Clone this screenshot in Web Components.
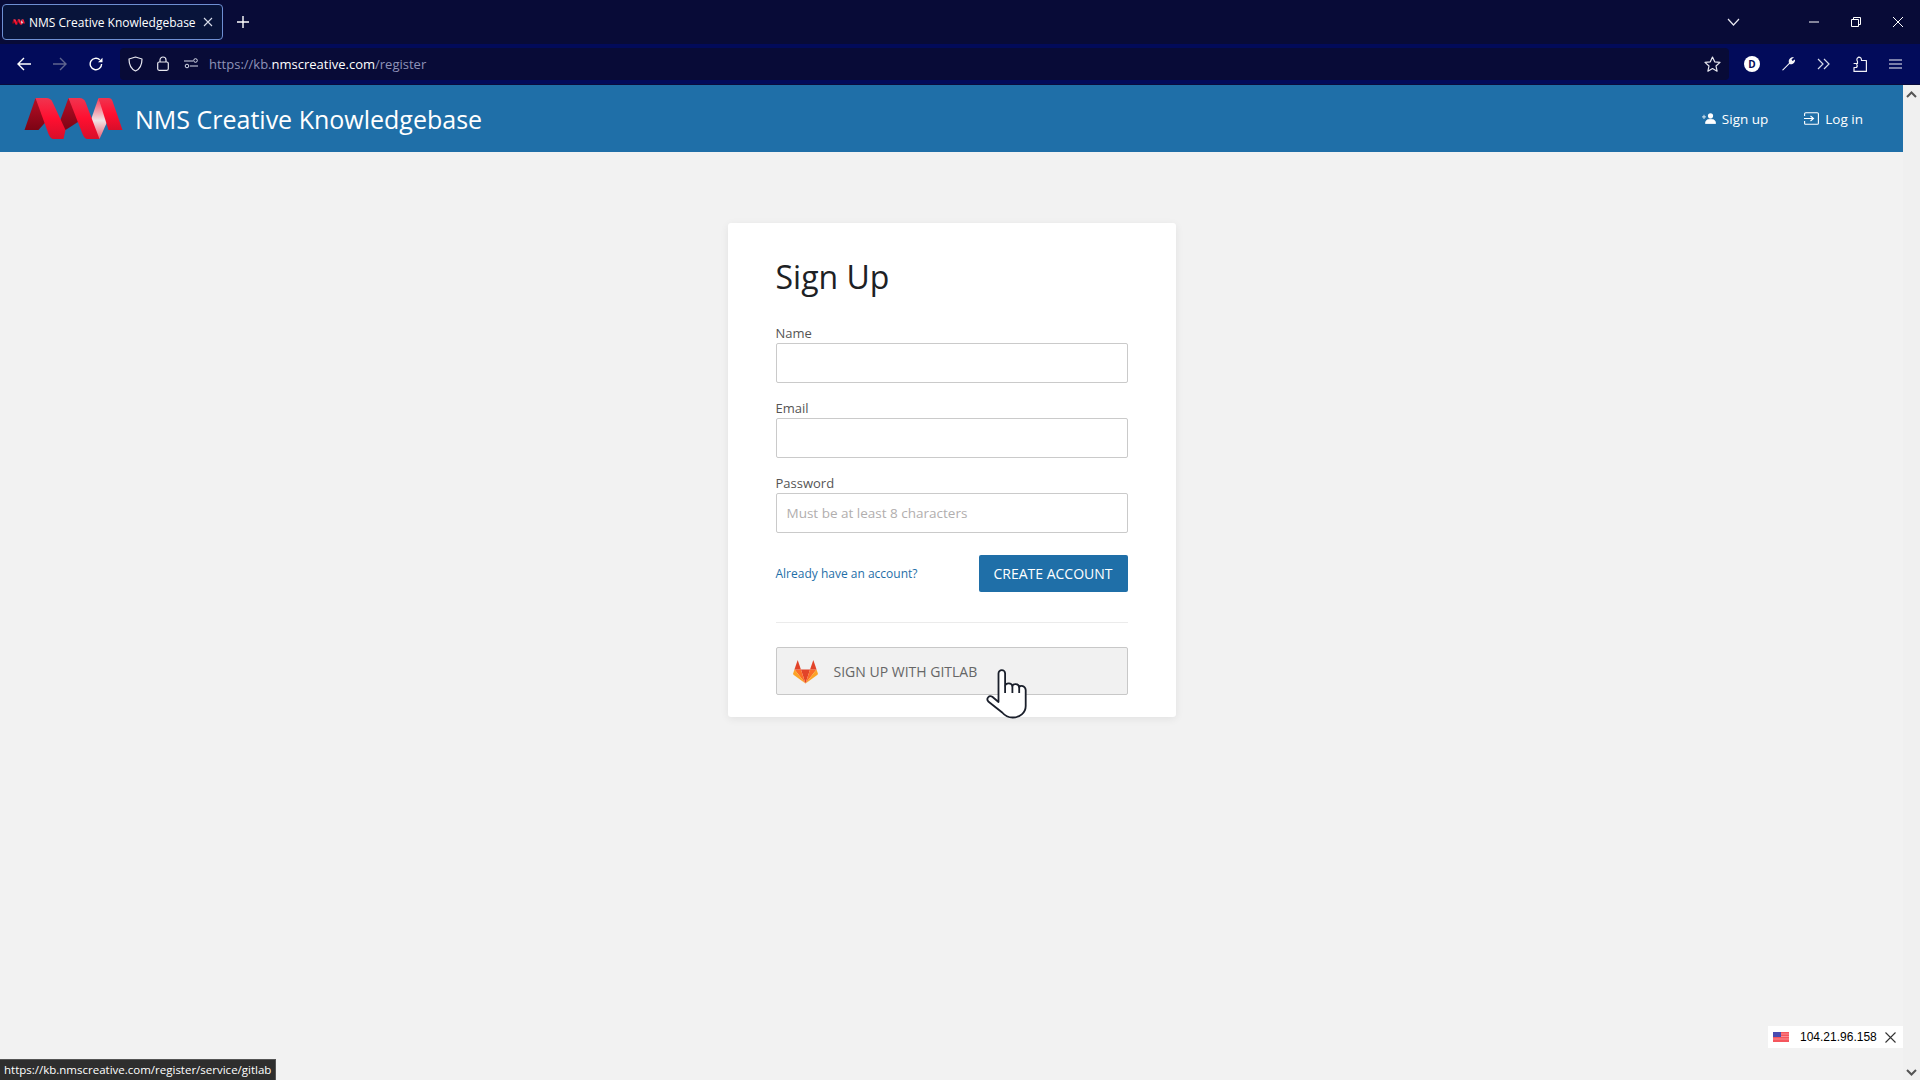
<!DOCTYPE html>
<html lang="en">
<head>
<meta charset="utf-8">
<title>NMS Creative Knowledgebase</title>
<style>
  html, body { margin: 0; height: 100%; overflow: hidden; }
  body { display: flex; flex-direction: column; width: 1920px; height: 1080px; background: #f2f2f2; font-family: "Open Sans", "Noto Sans", sans-serif; position: relative; }
</style>
</head>
<body>
<browser-tabs title-text="NMS Creative Knowledgebase"></browser-tabs>
<browser-toolbar></browser-toolbar>
<site-page>
  <site-header slot="header" brand="NMS Creative Knowledgebase"></site-header>
  <signup-card>
    <form-field label="Name"></form-field>
    <form-field label="Email"></form-field>
    <form-field label="Password" placeholder="Must be at least 8 characters"></form-field>
  </signup-card>
</site-page>
<status-tip>https://kb.nmscreative.com/register/service/gitlab</status-tip>
<ip-badge>104.21.96.158</ip-badge>
<hand-cursor></hand-cursor>

<script>
// Logo de NMS, se usa en el header y en pequeño en la pestaña
const logoNms = (w, h, id) => `
<svg width="${w}" height="${h}" viewBox="0 0 98 43" aria-hidden="true">
  <defs>
    <linearGradient id="${id}r" x1="0" y1="0" x2="0" y2="1"><stop offset="0" stop-color="#f0344f"/><stop offset=".5" stop-color="#ff0f30"/><stop offset="1" stop-color="#d80e2a"/></linearGradient>
    <linearGradient id="${id}d" x1="0" y1="0" x2="0" y2="1"><stop offset="0" stop-color="#b80d25"/><stop offset="1" stop-color="#7c0414"/></linearGradient>
    <linearGradient id="${id}w" x1="0" y1="0" x2="0" y2="1"><stop offset="0" stop-color="#fb3a55"/><stop offset=".55" stop-color="#eee4e6"/><stop offset="1" stop-color="#f25a70"/></linearGradient>
  </defs>
  <polygon points="0,33 11,1 22,24 14,33" fill="url(#${id}d)"/>
  <polygon points="34,28 44,1 55,24 41,33" fill="url(#${id}d)"/>
  <polygon points="66,24 74,1 83,24 75,42 68,35" fill="url(#${id}w)"/>
  <path d="M11 1H22Q26 1 28 5L41 33L39 42H29Q26 42 24 37Z" fill="url(#${id}r)"/>
  <path d="M44 1H55Q59 1 61 5L75 42H63Q60 42 58 37Z" fill="url(#${id}r)"/>
  <path d="M74 1H84Q87 1 88 4L98 33H84Z" fill="url(#${id}r)"/>
</svg>`;

class BrowserTabs extends HTMLElement {
  constructor() {
    super();
    this.attachShadow({ mode: 'open' });
  }
  connectedCallback() {
    this.shadowRoot.innerHTML = `
    <style>
      :host { display: flex; align-items: center; height: 44px; background: #080b37; color: #fff; flex: none; padding-left: 2px; box-sizing: border-box; }
      .tab { width: 221px; height: 36px; box-sizing: border-box; border: 1px solid #6e8fd3; border-radius: 4px; background: #08143a; display: flex; align-items: center; padding-left: 9px; font-size: 12px; }
      .tab span { margin-left: 4px; flex: 1; white-space: nowrap; }
      .tab svg.x { margin-right: 9px; }
      .plus { margin-left: 14px; }
      .right { margin-left: auto; display: flex; align-items: center; }
      .down { margin-right: 69px; }
      .ctl { margin-right: 32px; display: flex; }
    </style>
    <div class="tab">
      ${logoNms(13, 6, 'fav')}
      <span>${this.getAttribute('title-text')}</span>
      <svg class="x" width="10" height="10" viewBox="0 0 10 10"><path d="M1 1L9 9M9 1L1 9" stroke="#d8dcea" stroke-width="1.1"/></svg>
    </div>
    <svg class="plus" width="12" height="12" viewBox="0 0 12 12"><path d="M6 0V12M0 6H12" stroke="#fff" stroke-width="1.4"/></svg>
    <div class="right">
      <svg class="down" width="13" height="8" viewBox="0 0 13 8"><path d="M1 1L6.5 7L12 1" fill="none" stroke="#e8e8f0" stroke-width="1.2"/></svg>
      <svg class="ctl" width="10" height="10" viewBox="0 0 10 10"><path d="M0 5H10" stroke="#fff" stroke-width="1"/></svg>
      <svg class="ctl" width="10" height="10" viewBox="0 0 10 10"><path d="M.5 2.5H7.5V9.5H.5ZM2.5 2.5V.5H9.5V7.5H7.5" fill="none" stroke="#fff" stroke-width="1"/></svg>
      <svg class="ctl" style="margin-right:17px" width="10" height="10" viewBox="0 0 10 10"><path d="M0 0L10 10M10 0L0 10" stroke="#fff" stroke-width="1"/></svg>
    </div>`;
  }
}
customElements.define('browser-tabs', BrowserTabs);

class BrowserToolbar extends HTMLElement {
  constructor() {
    super();
    this.attachShadow({ mode: 'open' });
  }
  connectedCallback() {
    this.shadowRoot.innerHTML = `
    <style>
      :host { display: flex; align-items: center; height: 41px; background: #020b5a; flex: none; box-sizing: border-box; padding: 0 0 1px 17px; color: #fff; border-bottom: 1px solid #0a0c3a; }
      svg { flex: none; display: block; }
      .nav { display: flex; align-items: center; gap: 22px; }
      .url { margin-left: 17px; width: 1609px; height: 32px; background: #080b37; border-radius: 4px; display: flex; align-items: center; padding-left: 8px; box-sizing: border-box; }
      .addr { margin-left: 10px; font-size: 13px; color: #8f93b8; white-space: nowrap; }
      .addr b { font-weight: 400; color: #fff; }
      .star { margin-left: auto; margin-right: 8px; }
      .tools { display: flex; align-items: center; margin-left: 15px; }
      .d { width: 16px; height: 16px; border-radius: 50%; background: #fff; color: #020b5a; font: 700 10px/16px "Open Sans", sans-serif; text-align: center; }
    </style>
    <div class="nav">
      <svg width="14" height="14" viewBox="0 0 14 14"><path d="M14 7H1M7 1L1 7L7 13" fill="none" stroke="#fff" stroke-width="1.4"/></svg>
      <svg width="14" height="14" viewBox="0 0 14 14"><path d="M0 7H13M7 1L13 7L7 13" fill="none" stroke="#60668f" stroke-width="1.4"/></svg>
      <svg width="14" height="14" viewBox="0 0 14 14"><path d="M12.6 7A5.7 5.7 0 1 1 10.8 2.8" fill="none" stroke="#fff" stroke-width="1.4"/><path d="M13.5 .7V5.2H9Z" fill="#fff"/></svg>
    </div>
    <div class="url">
      <svg width="15" height="16" viewBox="0 0 15 16"><path d="M7.5 1L14 3C14 9 12 13 7.5 15C3 13 1 9 1 3Z" fill="none" stroke="#e8e8f0" stroke-width="1.2" stroke-linejoin="round"/></svg>
      <svg style="margin-left:14px" width="12" height="15" viewBox="0 0 12 15"><rect x=".7" y="6" width="10.6" height="8.3" rx="1.5" fill="none" stroke="#e8e8f0" stroke-width="1.2"/><path d="M3 6V4a3 3 0 0 1 6 0V6" fill="none" stroke="#e8e8f0" stroke-width="1.2"/></svg>
      <svg style="margin-left:15px" width="15" height="11" viewBox="0 0 15 11"><circle cx="11.5" cy="2.5" r="1.8" fill="none" stroke="#d8dcea"/><circle cx="3" cy="8" r="1.8" fill="none" stroke="#d8dcea"/><path d="M0 3H9M14 8H6" stroke="#d8dcea" stroke-width="1.1"/></svg>
      <div class="addr">https://kb.<b>nmscreative.com</b>/register</div>
      <svg class="star" width="17" height="16" viewBox="0 0 17 16"><path d="M8.5 1L10.7 5.8L16 6.4L12 10L13.1 15.2L8.5 12.6L3.9 15.2L5 10L1 6.4L6.3 5.8Z" fill="none" stroke="#e8e8f0" stroke-width="1.2" stroke-linejoin="round"/></svg>
    </div>
    <div class="tools">
      <div class="d">D</div>
      <svg style="margin-left:21px" width="15" height="15" viewBox="0 0 15 15"><path d="M1 14L8 7C7 4 9 .8 13 1L10.5 3.5L11.5 5L14 3.5C14.500 7 11 9 8.500 8L2 14.500Z" fill="#f4f4f8"/></svg>
      <svg style="margin-left:21px" width="13" height="12" viewBox="0 0 13 12"><path d="M1 1L6 6L1 11M7 1L12 6L7 11" fill="none" stroke="#d8dcea" stroke-width="1.2"/></svg>
      <svg style="margin-left:23px" width="14" height="16" viewBox="0 0 14 16"><path d="M.6 7.500H4.500V5.500Q2.800 3 5.500 1.200Q8.500 1 8.500 4.500H13.400V15.400H1V11.500H3.500Q5 10 3.500 8" fill="none" stroke="#f0f0f6" stroke-width="1.200" stroke-linejoin="round"/></svg>
      <svg style="margin-left:22px" width="13" height="10" viewBox="0 0 13 10"><path d="M0 1H13M0 5H13M0 9H13" stroke="#f4f4f8" stroke-width="1.100"/></svg>
    </div>`;
  }
}
customElements.define('browser-toolbar', BrowserToolbar);

// Contenedor de la página: contenido a la izquierda y scrollbar a la derecha
class SitePage extends HTMLElement {
  constructor() {
    super();
    this.attachShadow({ mode: 'open' });
    this.shadowRoot.innerHTML = `
    <style>
      :host { display: flex; flex: 1; min-height: 0; }
      .content { flex: 1; display: flex; flex-direction: column; min-width: 0; }
      main { display: flex; justify-content: center; padding: 71px 0 0; }
      .bar { width: 17px; background: #f0f0f0; display: flex; flex-direction: column; justify-content: space-between; align-items: center; padding: 6px 0 4px; box-sizing: border-box; }
    </style>
    <div class="content">
      <slot name="header"></slot>
      <main><slot></slot></main>
    </div>
    <div class="bar">
      <svg width="11" height="7" viewBox="0 0 11 7"><path d="M1 6L5.500 1.500L10 6" fill="none" stroke="#555" stroke-width="2"/></svg>
      <svg width="11" height="7" viewBox="0 0 11 7"><path d="M1 1L5.500 5.500L10 1" fill="none" stroke="#555" stroke-width="2"/></svg>
    </div>`;
  }
}
customElements.define('site-page', SitePage);

class SiteHeader extends HTMLElement {
  constructor() {
    super();
    this.attachShadow({ mode: 'open' });
  }
  connectedCallback() {
    this.shadowRoot.innerHTML = `
    <style>
      :host { display: flex; align-items: center; height: 67px; background: #1f6fa8; color: #fff; padding: 0 40px 0 24px; flex: none; }
      .brand { margin-left: 12px; font-size: 25px; white-space: nowrap; }
      nav { margin-left: auto; display: flex; gap: 36px; font-size: 13.500px; }
      a { display: flex; align-items: center; color: #fff; text-decoration: none; }
      a svg { margin-right: 6px; }
    </style>
    ${logoNms(99, 43, 'hdr')}
    <div class="brand">${this.getAttribute('brand')}</div>
    <nav>
      <a href="#"><svg width="14" height="11" viewBox="0 0 14 11"><circle cx="8.500" cy="2.800" r="2.600" fill="#fff"/><path d="M3.500 10.500C3.500 7 6 6.200 8.500 6.200S13.600 7 13.600 10.500ZM2 1.800V6M0 3.900H4" fill="#fff" stroke="#fff" stroke-width=".8"/></svg>Sign up</a>
      <a href="#"><svg width="15" height="13" viewBox="0 0 15 13"><path d="M.6 4V1.800Q.6 .7 1.800 .7H13.200Q14.400 .7 14.400 1.800V11.200Q14.400 12.300 13.200 12.300H1.800Q.6 12.300 .6 11.200V9" fill="none" stroke="#fff" stroke-width="1.100"/><path d="M0 6.500H9M6.500 4L9.500 6.500L6.500 9" fill="none" stroke="#fff" stroke-width="1.100"/></svg>Log in</a>
    </nav>`;
  }
}
customElements.define('site-header', SiteHeader);

class FormField extends HTMLElement {
  constructor() {
    super();
    this.attachShadow({ mode: 'open' });
  }
  connectedCallback() {
    const ph = this.getAttribute('placeholder') || '';
    this.shadowRoot.innerHTML = `
    <style>
      :host { display: block; margin-bottom: 16px; }
      label { display: block; font-size: 13px; line-height: 19px; color: #555; }
      .box { height: 40px; box-sizing: border-box; border: 1px solid #cacaca; border-radius: 2px; background: #fff; padding: 0 10px; display: flex; align-items: center; font-size: 13.500px; color: #b1aeae; }
    </style>
    <label>${this.getAttribute('label')}</label>
    <div class="box">${ph}</div>`;
  }
}
customElements.define('form-field', FormField);

class SignupCard extends HTMLElement {
  constructor() {
    super();
    this.attachShadow({ mode: 'open' });
    this.shadowRoot.innerHTML = `
    <style>
      :host { display: block; width: 448px; box-sizing: border-box; background: #fff; border-radius: 3px; box-shadow: 0 2px 8px rgba(0,0,0,.07); padding: 30px 48px 22px; color: #212529; }
      h1 { margin: 0 0 23px; font-size: 32px; line-height: 48px; font-weight: 400; color: #1d2124; }
      .actions { display: flex; justify-content: space-between; align-items: center; margin-top: 22px; }
      a { font-size: 12px; color: #1f6fa8; text-decoration: none; }
      button { width: 149px; height: 37px; border: 0; border-radius: 2px; background: #1f6fa8; color: #fff; font: 400 14px "Open Sans", sans-serif; padding: 0; white-space: nowrap; }
      hr { border: 0; border-top: 1px solid #ebebeb; margin: 30px 0 24px; }
      .oauth { height: 48px; box-sizing: border-box; border: 1px solid #c8c8c8; border-radius: 2px; background: #f1f1f1; display: flex; align-items: center; padding-left: 16px; font-size: 14px; color: #666; }
      .oauth svg { margin-right: 16px; }
    </style>
    <h1>Sign Up</h1>
    <slot></slot>
    <div class="actions">
      <a href="#">Already have an account?</a>
      <button>CREATE ACCOUNT</button>
    </div>
    <hr>
    <div class="oauth">
      <svg width="25" height="25" viewBox="0 0 24 24">
        <polygon points="12,23.500 16.400,10 7.600,10" fill="#e24329"/>
        <polygon points="12,23.500 7.600,10 1.400,10" fill="#fc6d26"/>
        <polygon points="1.400,10 0,14.300 .8,15.300 12,23.500" fill="#fca326"/>
        <polygon points="1.400,10 7.600,10 4.500,1" fill="#e24329"/>
        <polygon points="12,23.500 16.400,10 22.600,10" fill="#fc6d26"/>
        <polygon points="22.600,10 24,14.300 23.200,15.300 12,23.500" fill="#fca326"/>
        <polygon points="22.600,10 16.400,10 19.500,1" fill="#e24329"/>
      </svg>
      SIGN UP WITH GITLAB
    </div>`;
  }
}
customElements.define('signup-card', SignupCard);

// Tooltip de estado del navegador, va encima de la página
class StatusTip extends HTMLElement {
  constructor() {
    super();
    this.attachShadow({ mode: 'open' });
    this.shadowRoot.innerHTML = `
    <style>
      :host { position: absolute; left: 0; bottom: 0; height: 21px; width: 276px; box-sizing: border-box; background: #2e2e2e; border: 1px solid #555; border-width: 1px 1px 0 0; color: #fff; font-size: 11.500px; line-height: 20px; padding-left: 4px; white-space: nowrap; }
    </style>
    <slot></slot>`;
  }
}
customElements.define('status-tip', StatusTip);

// Badge de IP arriba de la scrollbar
class IpBadge extends HTMLElement {
  constructor() {
    super();
    this.attachShadow({ mode: 'open' });
    this.shadowRoot.innerHTML = `
    <style>
      :host { position: absolute; left: 1768px; top: 1026px; width: 135px; height: 22px; box-sizing: border-box; background: #fff; display: flex; align-items: center; padding-left: 5px; font: 12px "Liberation Sans", Arial, sans-serif; color: #000; }
      .flag { margin-right: 11px; flex: none; }
      .x { margin-left: 8px; flex: none; }
    </style>
    <svg class="flag" width="16" height="10" viewBox="0 0 16 10"><rect width="16" height="10" fill="#f5565d"/><path d="M0 2H16M0 4.500H16M0 7H16" stroke="#fda0a3" stroke-width=".8"/><rect width="8" height="5" fill="#4a4cb0"/></svg>
    <slot></slot>
    <svg class="x" width="11" height="11" viewBox="0 0 11 11"><path d="M.5 .5L10.500 10.500M10.500 .5L.5 10.500" stroke="#333" stroke-width="1.100"/></svg>`;
  }
}
customElements.define('ip-badge', IpBadge);

// Puntero de mano que aparece en la captura
class HandCursor extends HTMLElement {
  constructor() {
    super();
    this.attachShadow({ mode: 'open' });
    this.shadowRoot.innerHTML = `
    <style>
      :host { position: absolute; left: 985px; top: 668px; width: 44px; height: 52px; }
    </style>
    <svg width="44" height="52" viewBox="0 0 44 52">
      <path d="M13.500 5.500a3.300 3.300 0 0 1 6.600 0V17.500c1-3 6.500-3 7.300 .5c1-2.600 6-2.600 6.800 1c1.500-2 6-1.300 6.500 3V38c0 7-6 11.500-13 11.500c-5 0-8-2-10.500-5L3.300 33.500c-2.500-3 .9-6.800 4-4.700L13.500 34Z" fill="#fff" stroke="#1a1f2b" stroke-width="1.800" stroke-linejoin="round"/>
      <path d="M20.100 17.500V25M27.400 18V25M34.200 19V25" fill="none" stroke="#1a1f2b" stroke-width="1.800"/>
    </svg>`;
  }
}
customElements.define('hand-cursor', HandCursor);
</script>
</body>
</html>
